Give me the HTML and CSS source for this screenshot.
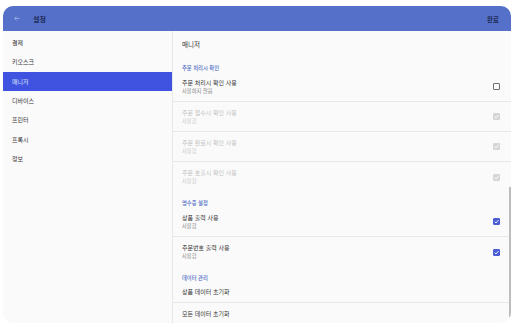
FILE: index.html
```html
<!DOCTYPE html>
<html lang="ko">
<head>
<meta charset="utf-8">
<link rel="stylesheet" href="styles.css">
</head>
<body>
<div class="device">
  <header class="appbar">
    <svg class="back" width="6" height="5" viewBox="0 0 6 5"><path d="M5.5 2.5H0.8M2.6 0.6L0.7 2.5L2.6 4.4" fill="none" stroke="#a8b5ea" stroke-width="0.8"/></svg>
    <span class="title">설정</span>
    <span class="spacer"></span>
    <span class="done">완료</span>
  </header>
  <div class="body">
    <nav class="sidebar">
      <div class="nav-item">결제</div>
      <div class="nav-item">키오스크</div>
      <div class="nav-item active">매니저</div>
      <div class="nav-item">디바이스</div>
      <div class="nav-item">프린터</div>
      <div class="nav-item">프록시</div>
      <div class="nav-item">정보</div>
    </nav>
    <main class="panel">
      <div class="panel-title">매니저</div>
      <div class="section">주문 처리시 확인</div>
      <div class="row">
        <div class="texts"><div class="r-title">주문 처리시 확인 사용</div><div class="r-sub">사용하지 않음</div></div>
        <span class="cb"></span>
      </div>
      <div class="row disabled">
        <div class="texts"><div class="r-title">주문 접수시 확인 사용</div><div class="r-sub">사용함</div></div>
        <span class="cb checked"><svg viewBox="0 0 7 7"><path d="M1.6 3.6L3 5L5.5 2" fill="none" stroke="#fff" stroke-width="0.9"/></svg></span>
      </div>
      <div class="row disabled">
        <div class="texts"><div class="r-title">주문 완료시 확인 사용</div><div class="r-sub">사용함</div></div>
        <span class="cb checked"><svg viewBox="0 0 7 7"><path d="M1.6 3.6L3 5L5.5 2" fill="none" stroke="#fff" stroke-width="0.9"/></svg></span>
      </div>
      <div class="row disabled last">
        <div class="texts"><div class="r-title">주문 호출시 확인 사용</div><div class="r-sub">사용함</div></div>
        <span class="cb checked"><svg viewBox="0 0 7 7"><path d="M1.6 3.6L3 5L5.5 2" fill="none" stroke="#fff" stroke-width="0.9"/></svg></span>
      </div>
      <div class="section">영수증 설정</div>
      <div class="row">
        <div class="texts"><div class="r-title">상품 출력 사용</div><div class="r-sub">사용함</div></div>
        <span class="cb checked"><svg viewBox="0 0 7 7"><path d="M1.6 3.6L3 5L5.5 2" fill="none" stroke="#fff" stroke-width="0.9"/></svg></span>
      </div>
      <div class="row last">
        <div class="texts"><div class="r-title">주문번호 출력 사용</div><div class="r-sub">사용함</div></div>
        <span class="cb checked"><svg viewBox="0 0 7 7"><path d="M1.6 3.6L3 5L5.5 2" fill="none" stroke="#fff" stroke-width="0.9"/></svg></span>
      </div>
      <div class="section">데이터 관리</div>
      <div class="row single"><div class="r-title">상품 데이터 초기화</div></div>
      <div class="row single last"><div class="r-title">모든 데이터 초기화</div></div>
    </main>
    <div class="scrollbar"></div>
  </div>
</div>
</body>
</html>
```
FILE: styles.css
```css
* { box-sizing: border-box; }
html, body { margin: 0; padding: 0; background: #ffffff; }
body {
  font-family: "Noto Sans CJK KR", "Noto Sans", sans-serif;
  padding: 6px 0 0 3px;
}
.device {
  width: 508px;
  height: 317px;
  border-radius: 10px;
  overflow: hidden;
  display: flex;
  flex-direction: column;
  background: #fafafa;
}
.appbar {
  height: 25px;
  flex: none;
  background: #5470c8;
  display: flex;
  align-items: center;
  padding: 0 12px 0 11px;
}
.back { display: block; margin-right: 13px; }
.title { font-size: 7px; font-weight: 700; color: #1f2b57; line-height: 8px; }
.spacer { flex: 1; }
.done { font-size: 6.5px; font-weight: 700; color: #1f2b57; line-height: 8px; }
.body { flex: 1; display: flex; position: relative; min-height: 0; }
.sidebar {
  width: 170px;
  flex: none;
  border-right: 1px solid #e8e8e8;
  padding-top: 2px;
}
.nav-item {
  height: 19.33px;
  display: flex;
  align-items: center;
  padding-left: 9px;
  font-size: 6px;
  color: #333;
}
.nav-item.active { background: #4053e0; color: #dfe3fb; }
.panel { flex: 1; min-width: 0; }
.panel-title {
  height: 26px;
  display: flex;
  align-items: center;
  padding-left: 9px;
  font-size: 6.5px;
  color: #333;
}
.section {
  height: 15px;
  padding: 7px 0 0 9px;
  font-size: 5.3px;
  font-weight: 500;
  line-height: 8px;
  color: #4f6ac6;
}
.row {
  height: 30px;
  display: flex;
  align-items: center;
  padding: 0 11px 0 9px;
  border-bottom: 1px solid #e8e8e8;
}
.row.last { border-bottom: none; }
.row.single { height: 21px; }
.texts { flex: 1; display: flex; flex-direction: column; }
.r-title { font-size: 6px; line-height: 8px; color: #333; }
.r-sub { font-size: 5.3px; line-height: 8px; color: #888; }
.row.disabled .r-title { color: #c2c2c2; }
.row.disabled .r-sub { color: #c8c8c8; }
.cb {
  width: 7px;
  height: 7px;
  flex: none;
  border: 1px solid #6f6f6f;
  border-radius: 1px;
  display: block;
}
.cb svg { display: block; width: 7px; height: 7px; margin: -1px; }
.cb.checked { background: #4a5bd6; border-color: #4a5bd6; }
.row.disabled .cb.checked { background: #d6d6d6; border-color: #d6d6d6; }
.scrollbar {
  position: absolute;
  right: 0;
  top: 156px;
  width: 2px;
  height: 130px;
  background: #bdbdbd;
}
```
